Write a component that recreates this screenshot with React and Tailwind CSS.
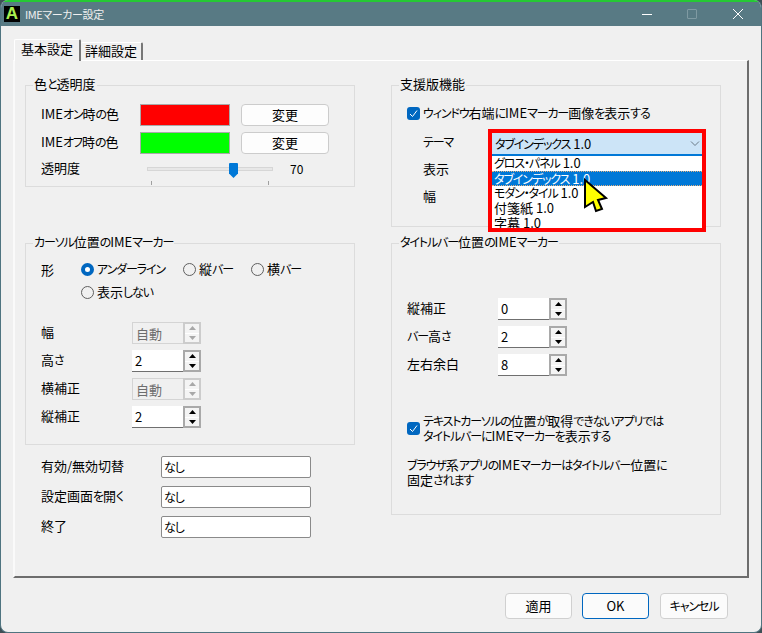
// Meiryo UI kana are much narrower than Noto's, so kana runs get squeezed
const T = ({ children }) =>
  children.split(/([ぁ-んァ-ヶー・]+)/).map((part, i) =>
    i % 2 ? (
      <span key={i} className="text-[12px] tracking-[-1.1px]">
        {part}
      </span>
    ) : (
      part
    )
  );

const Group = ({ title, className, children }) => (
  <div className={`relative border border-[#dcdcdc] ${className}`}>
    <span className="absolute left-[7px] top-[-11px] bg-[#f0f0f0] px-[1px] leading-[18px]">
      <T>{title}</T>
    </span>
    {children}
  </div>
);

const Arrow = ({ up, color }) => (
  <svg width="7" height="4" viewBox="0 0 7 4">
    <polygon points={up ? "3.5,0 7,4 0,4" : "0,0 7,0 3.5,4"} fill={color} />
  </svg>
);

const Spin = ({ value, disabled }) => (
  <div className="flex h-[22px] w-[69px]">
    <div
      className={`h-full w-[51px] pl-[3px] leading-[22px] ${
        disabled
          ? "border-y border-l border-[#d4d4d4] text-[#6d6d6d]"
          : "border-b border-[#6f6f6f] bg-white"
      }`}
    >
      {value}
    </div>
    <div
      className={`flex w-[18px] flex-col gap-[1px] border-2 bg-white ${
        disabled ? "border-[#cccccc]" : "border-[#a9a9a9]"
      }`}
    >
      <div className="flex flex-1 items-center justify-center bg-[#f4f4f4]">
        <Arrow up color={disabled ? "#a8a8a8" : "#000"} />
      </div>
      <div className="flex flex-1 items-center justify-center bg-[#f4f4f4]">
        <Arrow color={disabled ? "#a8a8a8" : "#000"} />
      </div>
    </div>
  </div>
);

const SpinRow = ({ label, value, disabled }) => (
  <div className="flex items-center">
    <span className="w-[91px] pb-[3px]">
      <T>{label}</T>
    </span>
    <Spin value={value} disabled={disabled} />
  </div>
);

const Radio = ({ label, checked, className }) => (
  <div className={`flex items-center gap-[3px] ${className || ""}`}>
    <span
      className={`h-[13px] w-[13px] rounded-full ${
        checked ? "border-[4px] border-[#0067c0] bg-white" : "border border-[#5f5f5f]"
      }`}
    ></span>
    <span>
      <T>{label}</T>
    </span>
  </div>
);

const Checkbox = () => (
  <span className="flex h-[13px] w-[13px] shrink-0 items-center justify-center rounded-[3px] bg-[#0067c0]">
    <svg width="9" height="9" viewBox="0 0 9 9" fill="none" stroke="#fff" strokeWidth="1">
      <path d="M1 5 L3.5 7.5 L8 1.5" />
    </svg>
  </span>
);

const ColorRow = ({ label, color }) => (
  <div className="flex items-center">
    <span className="w-[99px] pb-[3px]">
      <T>{label}</T>
    </span>
    <div className={`h-[22px] w-[90px] border border-[#a9a9a9] ${color}`}></div>
    <button className="ml-[11px] h-[22px] w-[88px] rounded-[4px] border border-[#cccccc] bg-[#fdfdfd]">
      変更
    </button>
  </div>
);

const KeyRow = ({ label }) => (
  <div className="flex items-center">
    <span className="w-[120px] pb-[2px]">
      <T>{label}</T>
    </span>
    <div className="h-[22px] w-[150px] rounded-[2px] border border-[#8a8a8a] bg-white pl-[2px] leading-[20px]">
      <T>なし</T>
    </div>
  </div>
);

const themes = ["グロス・パネル 1.0", "タブインデックス 1.0", "モダン・タイル 1.0", "付箋紙 1.0", "字幕 1.0"];

const ThemeDropdown = () => (
  <div className="absolute left-[96px] top-[43px] h-[103px] w-[218px] overflow-hidden border-4 border-[#ff0000] bg-white">
    <div className="flex h-[23px] items-center justify-between border-b-2 border-[#0078d7] bg-[#cce4f7] pl-[3px] pr-[2px]">
      <span>
        <T>タブインデックス 1.0</T>
      </span>
      <svg width="10" height="6" viewBox="0 0 10 6" fill="none" stroke="#6a7a86" strokeWidth="1">
        <path d="M1 0.5 L5 4.5 L9 0.5" />
      </svg>
    </div>
    {themes.map((name, i) => (
      <div
        key={name}
        className={`h-[15px] pl-[2px] leading-[14px] ${
          i === 1 ? "border-y border-dotted border-[#e2b080] bg-[#0078d7] leading-[12px] text-white" : ""
        }`}
      >
        <T>{name}</T>
      </div>
    ))}
  </div>
);

export default function App() {
  return (
    <div className="h-[633px] w-[762px] overflow-hidden bg-[#3d4f55] font-['Noto_Sans_CJK_JP',sans-serif] text-[13px] leading-[18px] text-black [font-feature-settings:'palt']">
      <div className="relative flex h-full flex-col overflow-hidden rounded-lg border-x border-b border-[#4f7480] bg-[#f0f0f0]">
        <div className="h-[2px] shrink-0 bg-[#25c934]"></div>

        <div className="flex h-[24px] shrink-0 items-center bg-[#587a84] pl-[3px] text-[#f0f0f0]">
          <span className="flex h-[16px] w-[16px] items-center justify-center bg-black font-['Liberation_Sans',sans-serif] text-[17px] font-bold text-[#a8f050]">
            A
          </span>
          <span className="ml-[5px] text-[11px] tracking-[-0.4px]">IMEマーカー設定</span>
          <div className="ml-auto flex items-center pr-[18px]">
            <div className="h-[1px] w-[10px] bg-white"></div>
            <div className="ml-[35px] h-[10px] w-[10px] rounded-[1px] border border-[#7f9aa2]"></div>
            <svg className="ml-[36px]" width="10" height="10" viewBox="0 0 10 10" stroke="#fff" strokeWidth="1">
              <path d="M0 0 L10 10 M10 0 L0 10" />
            </svg>
          </div>
        </div>

        <div className="ml-[13px] mt-[13px] flex h-[21px] shrink-0 items-end">
          <div className="z-10 mb-[-1px] h-[22px] w-[67px] rounded-t-[2px] border-l border-r-2 border-t border-l-white border-r-[#777777] border-t-white bg-[#f0f0f0] pl-[6px]">
            基本設定
          </div>
          <div className="h-[18px] w-[62px] rounded-t-[2px] border-r-2 border-t border-r-[#777777] border-t-white pl-[4px] leading-[16px]">
            詳細設定
          </div>
        </div>

        <div className="ml-[12px] flex h-[518px] w-[736px] shrink-0 gap-[36px] border-b-2 border-l-2 border-r-2 border-t border-b-[#6d6d6d] border-l-[#fafafa] border-r-[#6d6d6d] border-t-white pl-[10px] pt-[24px]">
          <div className="w-[330px]">
            <Group title="色と透明度" className="h-[102px] pl-[15px] pt-[18px]">
              <div className="flex flex-col gap-[6px]">
                <ColorRow label="IMEオン時の色" color="bg-[#ff0000]" />
                <ColorRow label="IMEオフ時の色" color="bg-[#00ff00]" />
              </div>
              <div className="mt-[5px] flex h-[20px] items-center">
                <span className="w-[106px] pb-[2px]">透明度</span>
                <div className="relative h-[4px] w-[126px] border border-[#d6d6d6] bg-[#e7e7e7]">
                  <svg className="absolute left-[81px] top-[-5px]" width="9" height="15" viewBox="0 0 9 15">
                    <path d="M1 0 H8 Q9 0 9 1 V10.5 L4.5 15 L0 10.5 V1 Q0 0 1 0 Z" fill="#0078d7" />
                  </svg>
                  <div className="absolute left-[3px] top-[13px] h-[4px] w-[1px] bg-[#a0a0a0]"></div>
                  <div className="absolute left-[120px] top-[13px] h-[4px] w-[1px] bg-[#a0a0a0]"></div>
                </div>
                <span className="ml-[17px] text-[12px]">70</span>
              </div>
            </Group>

            <Group title="カーソル位置のIMEマーカー" className="mt-[56px] h-[202px] pl-[15px] pt-[15px]">
              <div className="flex h-[20px] items-center">
                <span className="w-[40px] pt-[2px]">形</span>
                <Radio label="アンダーライン" checked className="w-[102px]" />
                <Radio label="縦バー" className="w-[68px]" />
                <Radio label="横バー" />
              </div>
              <Radio label="表示しない" className="ml-[40px] mt-[3px] h-[20px]" />
              <div className="mt-[20px] flex flex-col gap-[6px]">
                <SpinRow label="幅" value="自動" disabled />
                <SpinRow label="高さ" value="2" />
                <SpinRow label="横補正" value="自動" disabled />
                <SpinRow label="縦補正" value="2" />
              </div>
            </Group>

            <div className="ml-[16px] mt-[11px] flex flex-col gap-[8px]">
              <KeyRow label="有効/無効切替" />
              <KeyRow label="設定画面を開く" />
              <KeyRow label="終了" />
            </div>
          </div>

          <div className="w-[330px]">
            <Group title="支援版機能" className="h-[142px] pl-[15px] pt-[17px]">
              <div className="flex h-[20px] items-center gap-[3px]">
                <Checkbox />
                <span>
                  <T>ウィンドウ右端にIMEマーカー画像を表示する</T>
                </span>
              </div>
              <div className="ml-[16px] mt-[9px] flex flex-col gap-[7px]">
                <div className="h-[20px] leading-[20px]">
                  <T>テーマ</T>
                </div>
                <div className="h-[20px] leading-[20px]">表示</div>
                <div className="h-[20px] leading-[20px]">幅</div>
              </div>
              <ThemeDropdown />
            </Group>

            <Group title="タイトルバー位置のIMEマーカー" className="mt-[16px] h-[272px] pl-[15px] pt-[54px]">
              <div className="flex flex-col gap-[6px]">
                <SpinRow label="縦補正" value="0" />
                <SpinRow label="バー高さ" value="2" />
                <SpinRow label="左右余白" value="8" />
              </div>
              <div className="mt-[37px] flex items-center gap-[3px] leading-[15px]">
                <Checkbox />
                <span>
                  <T>テキストカーソルの位置が取得できないアプリでは</T>
                  <br />
                  <T>タイトルバーにIMEマーカーを表示する</T>
                </span>
              </div>
              <p className="mt-[14px] leading-[15px]">
                <T>ブラウザ系アプリのIMEマーカーはタイトルバー位置に</T>
                <br />
                <T>固定されます</T>
              </p>
            </Group>
          </div>
        </div>

        <div className="mt-[15px] flex justify-end pr-[33px]">
          <button className="h-[26px] w-[67px] rounded-[4px] border border-[#d0d0d0] bg-[#fbfbfb] pb-[1px]">適用</button>
          <button className="ml-[10px] h-[26px] w-[67px] rounded-[4px] border border-[#0067c0] bg-[#fbfbfb] pb-[1px]">OK</button>
          <button className="ml-[11px] h-[26px] w-[68px] rounded-[4px] border border-[#d0d0d0] bg-[#fbfbfb] pb-[1px]">
            <T>キャンセル</T>
          </button>
        </div>

        {/* mouse pointer over the dropdown */}
        <svg className="absolute left-[581px] top-[177px]" width="28" height="38" viewBox="0 0 28 38">
          <polygon points="3,3 24,21 16,23 20,32 14,34 11,25 3,30" fill="#ffff00" stroke="#000" strokeWidth="2" />
        </svg>
      </div>
    </div>
  );
}
